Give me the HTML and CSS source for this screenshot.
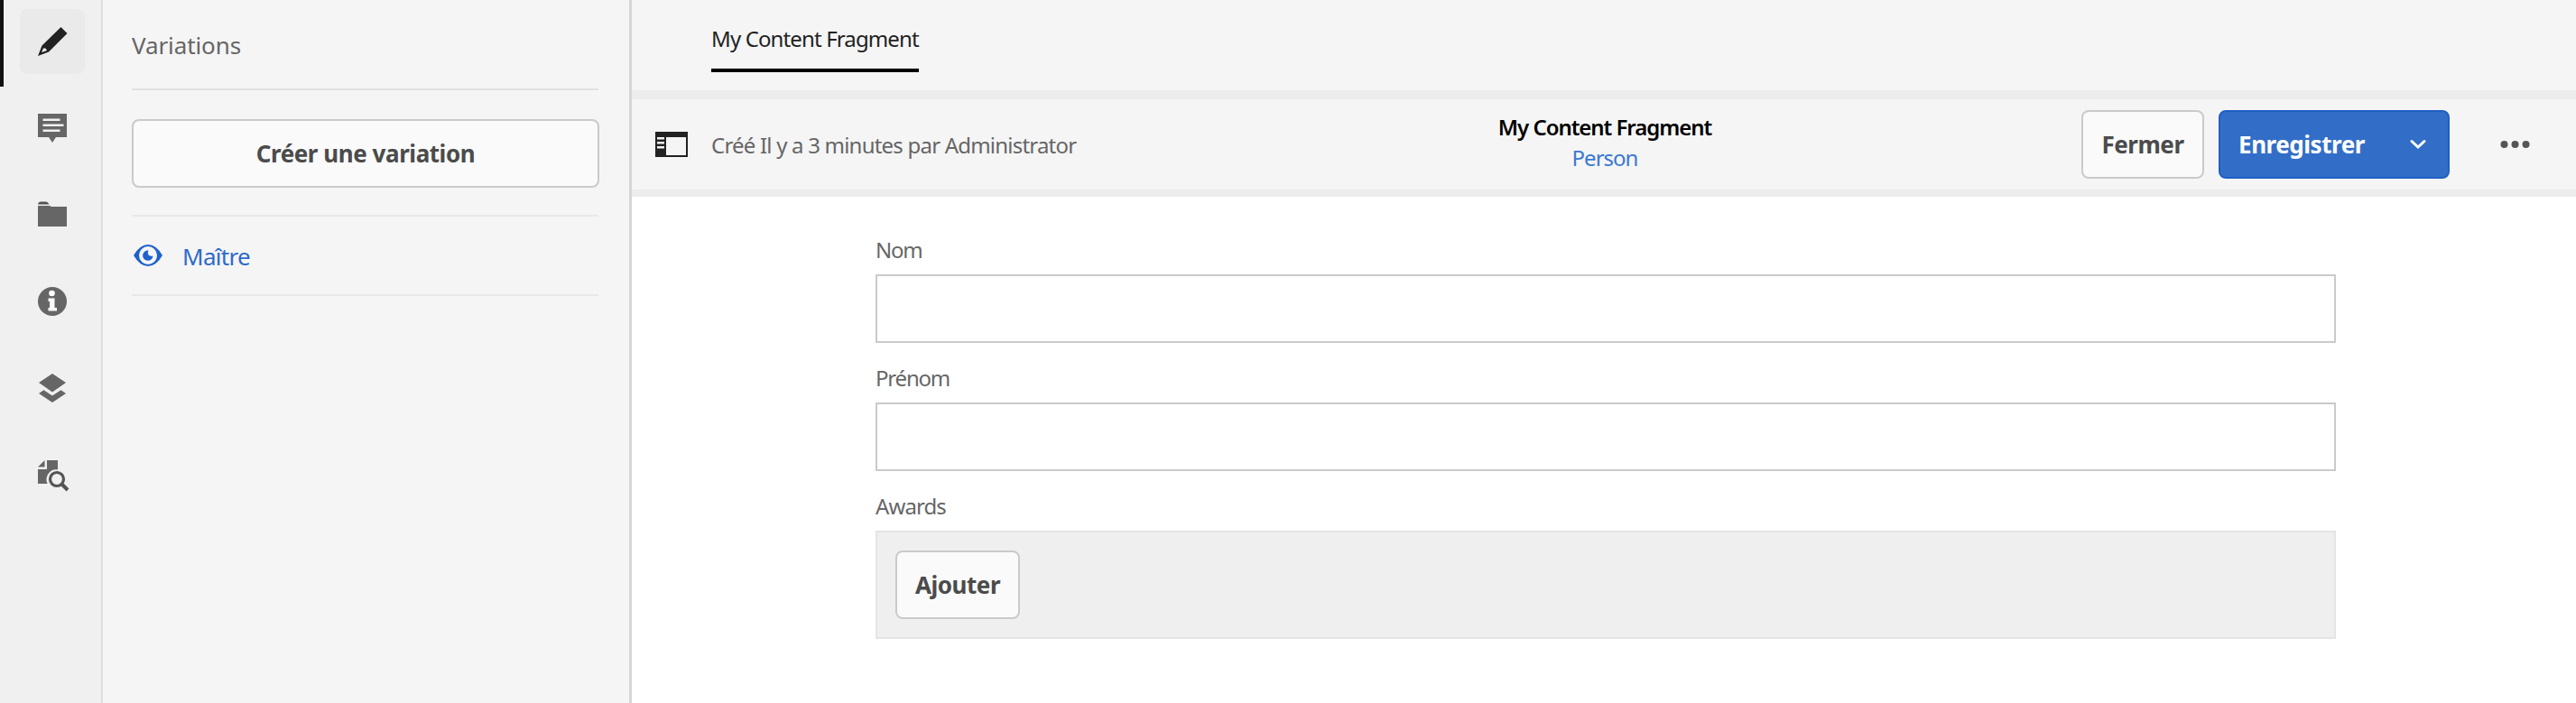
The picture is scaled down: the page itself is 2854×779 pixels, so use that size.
FILE: index.html
```html
<!DOCTYPE html>
<html lang="fr">
<head>
<meta charset="utf-8">
<title>My Content Fragment</title>
<link rel="stylesheet" href="styles.css">
</head>
<body>
<div class="app">
  <nav class="rail">
    <a class="rail-item rail-item-active"><span class="rail-icon"><svg width="36" height="36" viewBox="0 0 36 36"><path fill="#222" fill-rule="evenodd" d="M27.500 2 34.500 9 14 29.500 2 34 6.500 22.500zM8 25.500 6 30 12 28 10.500 25.500z"/></svg></span></a>
    <a class="rail-item"><span class="rail-icon"><svg width="36" height="36" viewBox="0 0 36 36"><path fill="#666" fill-rule="evenodd" d="M2 2h32v26H22l-4 6-4-6H2zM7.500 7.500v2.500h19V7.500zM7.500 13.500v2.500h23v-2.500zM7.500 19.500v2.500h19v-2.500z"/></svg></span></a>
    <a class="rail-item"><span class="rail-icon"><svg width="36" height="36" viewBox="0 0 36 36"><path fill="#555" d="M2 6.500q.5-3 3-3h6q1.500 0 2.500 1.500l1 1.500z"/><path fill="#666" d="M2 8h13.500l1 1H34v22H2z"/></svg></span></a>
    <a class="rail-item"><span class="rail-icon"><svg width="36" height="36" viewBox="0 0 36 36"><circle cx="18" cy="18" r="16" fill="#666"/><circle cx="17.500" cy="9" r="3.300" fill="#fff"/><path fill="#fff" d="M13.500 14.500h7V25H23v3.500h-9.500V25H15v-7h-1.500z"/></svg></span></a>
    <a class="rail-item"><span class="rail-icon"><svg width="36" height="36" viewBox="0 0 36 36"><path fill="#666" d="M18 2 33 12 18 22.500 3 12zM3 24l5.500-3.800L18 26.500l9.500-6.300L33 24 18 34z"/></svg></span></a>
    <a class="rail-item"><span class="rail-icon"><svg class="search-icon" width="36" height="36" viewBox="0 0 36 36"><path fill="#666" d="M2 9.500 9.500 2v7.500zM12 2h12v10.500a11 11 0 0 0-11.500 15.500H2V12h10z"/><circle cx="23" cy="23" r="7.500" fill="none" stroke="#555" stroke-width="3.200"/><path d="M28.500 28.500 35 35" stroke="#555" stroke-width="4"/></svg></span></a>
  </nav>
  <aside class="panel">
    <h2 class="panel-title">Variations</h2>
    <div class="panel-action"><button class="btn btn-wide">Créer une variation</button></div>
    <a class="variation"><svg width="36" height="36" viewBox="0 0 36 36"><path fill="#1f62cb" fill-rule="evenodd" d="M2 18Q9 6 18 6t16 12Q27 30 18 30T2 18zM8 18a10 10 0 0 0 20 0 10 10 0 0 0-20 0z"/><path fill="#1f62cb" d="M18.500 12.500a5.700 5.700 0 1 0 5 6q-3 1-5-1-1.500-2.500 0-5z"/></svg><span class="variation-name">Maître</span></a>
  </aside>
  <main class="main">
    <div class="tabs"><a class="tab">My Content Fragment</a></div>
    <header class="toolbar">
      <div class="toolbar-left">
        <svg width="36" height="28" viewBox="0 0 36 28"><path fill="#222" fill-rule="evenodd" d="M0 0h36v28H0zM12 6v20h22V6zM2 6v2.500h8V6zM2 11v2.500h8V11zM2 16v2.500h8V16z"/></svg>
        <span class="status">Créé Il y a 3 minutes par Administrator</span>
      </div>
      <div class="toolbar-center">
        <div class="doc-title">My Content Fragment</div>
        <a class="doc-model">Person</a>
      </div>
      <div class="toolbar-right">
        <button class="btn btn-close">Fermer</button>
        <button class="btn btn-save">Enregistrer<svg width="20" height="12" viewBox="0 0 20 12"><path d="M3 2.500 10 9 17 2.500" fill="none" stroke="#fff" stroke-width="3" stroke-linecap="round"/></svg></button>
        <svg class="more" width="36" height="10" viewBox="0 0 36 10"><g fill="#555"><circle cx="5.500" cy="5" r="4"/><circle cx="17.500" cy="5" r="4"/><circle cx="29.500" cy="5" r="4"/></g></svg>
      </div>
    </header>
    <form class="form">
      <label class="label">Nom</label>
      <div class="field"></div>
      <label class="label">Prénom</label>
      <div class="field"></div>
      <label class="label label-awards">Awards</label>
      <div class="multifield"><button type="button" class="btn btn-add">Ajouter</button></div>
    </form>
  </main>
</div>
</body>
</html>
```
FILE: styles.css
```css
* { box-sizing: border-box; }
body { margin: 0; font-family: "Noto Sans", "Open Sans", sans-serif; font-size: 24px; color: #4b4b4b; background: #fff; }
svg { display: block; flex: none; }
.app { display: flex; width: 2854px; height: 779px; overflow: hidden; white-space: nowrap; }

.rail { width: 114px; flex: none; background: #f0f0f0; border-right: 2px solid #dedede; }
.rail-item { display: flex; height: 96px; padding: 10px 0 0 22px; }
.rail-item-active { border-left: 4px solid #111; padding-left: 18px; }
.rail-icon { display: flex; align-items: center; justify-content: center; width: 72px; height: 72px; border-radius: 8px; }
.rail-item-active .rail-icon { background: #eaeaea; }
.search-icon { overflow: visible; }

.panel { width: 586px; flex: none; padding: 0 34px 0 32px; background: #f5f5f5; border-right: 3px solid #d6d6d6; }
.panel-title { margin: 0; height: 100px; font-size: 26px; font-weight: 400; line-height: 100px; letter-spacing: -0.1px; color: #666; border-bottom: 2px solid #e1e1e1; }
.panel-action { height: 140px; padding-top: 32px; border-bottom: 2px solid #e8e8e8; }
.variation { display: flex; align-items: center; gap: 20px; height: 88px; color: #2f6bc9; font-size: 26px; letter-spacing: -0.7px; border-bottom: 2px solid #e8e8e8; }
.variation-name { padding-top: 2px; }

.btn { display: flex; align-items: center; justify-content: center; height: 76px; padding: 0; font: 700 26px "Noto Sans", "Open Sans", sans-serif; letter-spacing: -0.45px; color: #4b4b4b; background: #fafafa; border: 2px solid #cacaca; border-radius: 8px; }
.btn-wide { width: 518px; }

.main { flex: 1; min-width: 0; }
.tabs { display: flex; height: 110px; padding-left: 88px; background: #f5f5f5; border-bottom: 10px solid #ececec; }
.tab { height: 80px; line-height: 86px; letter-spacing: -0.87px; color: #222; border-bottom: 4px solid #000; }
.toolbar { display: grid; grid-template-columns: 1fr auto 1fr; height: 108px; background: #f5f5f5; border-bottom: 8px solid #ececec; }
.toolbar-left { display: flex; align-items: center; gap: 26px; padding-left: 26px; color: #666; }
.status { letter-spacing: -0.79px; }
.toolbar-center { display: flex; flex-direction: column; align-items: center; padding: 14px 0 0 2px; line-height: 34px; }
.doc-title { font-weight: 600; letter-spacing: -1.05px; color: #000; }
.doc-model { letter-spacing: -1px; color: #3b78d2; }
.toolbar-right { display: flex; align-items: center; justify-content: flex-end; padding-right: 49px; }
.btn-close { width: 136px; margin-right: 16px; }
.btn-save { width: 256px; gap: 49px; padding-right: 3px; color: #fff; background: #326ec8; border-color: #1f5fc4; }
.more { margin-left: 55px; }

.form { width: 1618px; margin-left: 270px; padding-top: 40px; }
.label { display: block; height: 46px; line-height: 38px; letter-spacing: -1.2px; color: #666; }
.label-awards { letter-spacing: -0.9px; }
.field { height: 76px; margin-bottom: 20px; border: 2px solid #cacaca; background: #fff; }
.multifield { height: 120px; padding: 20px; background: #efefef; border: 2px solid #e4e4e4; }
.btn-add { width: 138px; }
```
